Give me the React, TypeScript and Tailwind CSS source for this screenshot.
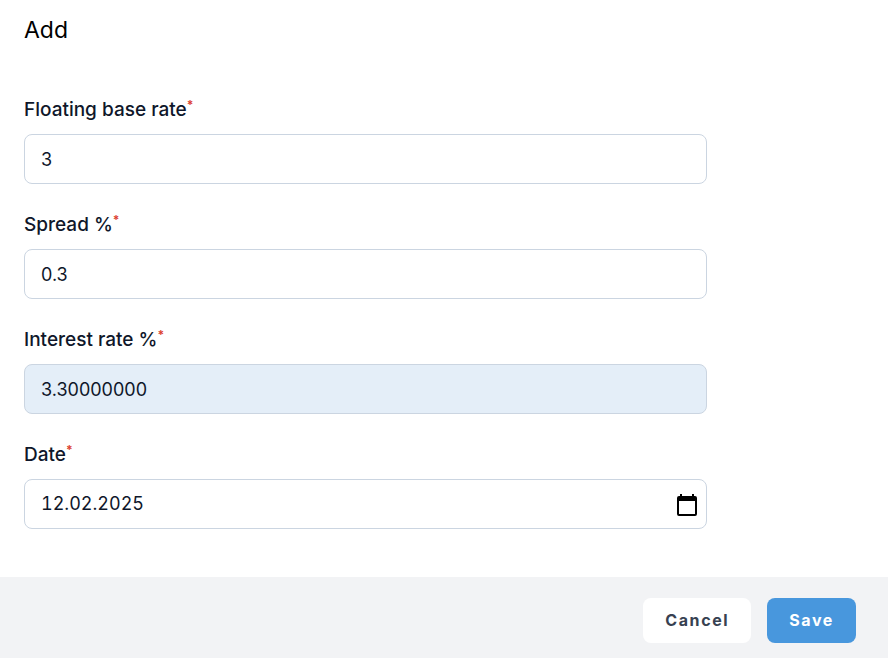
import { useState } from "react";
import type { FormEvent, ReactNode } from "react";

const inputClass =
  "h-[50px] w-full rounded-lg border border-[#cbd5e1] bg-white px-4 text-lg text-[#0f172a] outline-none focus:border-[#4897dd]";

function Field({ id, label, children }: { id: string; label: string; children: ReactNode }) {
  return (
    <div className="flex flex-col gap-[10px]">
      <label htmlFor={id} className="flex items-start text-[19px] leading-7 font-medium text-[#0f172a]">
        {label}
        <span className="text-xs leading-[18px] font-bold text-[#dc3f31]">*</span>
      </label>
      {children}
    </div>
  );
}

function CalendarIcon() {
  return (
    <svg width="20" height="22" viewBox="0 0 20 22" aria-hidden="true">
      <path
        fill="#000"
        fillRule="evenodd"
        d="M3 0h2v2h10V0h2v2h1a2 2 0 0 1 2 2v16a2 2 0 0 1-2 2H2a2 2 0 0 1-2-2V4a2 2 0 0 1 2-2h1zM2 7v13h16V7z"
      />
    </svg>
  );
}

export default function App() {
  const [base, setBase] = useState("3");
  const [spread, setSpread] = useState("0.3");
  const [date, setDate] = useState("12.02.2025");
  const rate = (Number(base) + Number(spread)).toFixed(8);

  return (
    <form
      className="flex min-h-screen flex-col bg-white font-['Inter',sans-serif]"
      onSubmit={(e: FormEvent) => e.preventDefault()}
    >
      <header className="px-6 pt-[14px]">
        <h1 className="text-[23px] leading-8 text-black">Add</h1>
      </header>

      <main className="flex grow flex-col px-6 pt-[50px] pb-12">
        <div className="flex w-full max-w-[683px] flex-col gap-[27px]">
          <Field id="base" label="Floating base rate">
            <input id="base" className={inputClass} value={base} onChange={(e) => setBase(e.target.value)} />
          </Field>
          <Field id="spread" label="Spread %">
            <input id="spread" className={inputClass} value={spread} onChange={(e) => setSpread(e.target.value)} />
          </Field>
          <Field id="rate" label="Interest rate %">
            <input
              id="rate"
              readOnly
              className="h-[50px] w-full rounded-lg border border-[#cbd5e1] bg-[#e4eef8] px-4 text-lg text-[#0f172a] outline-none"
              value={rate}
            />
          </Field>
          <Field id="date" label="Date">
            <div className="flex h-[50px] items-center rounded-lg border border-[#cbd5e1] bg-white pr-[9px] pl-4">
              <input
                id="date"
                className="min-w-0 grow bg-transparent text-lg text-[#0f172a] tabular-nums outline-none"
                value={date}
                onChange={(e) => setDate(e.target.value)}
              />
              <button type="button" aria-label="Open calendar" className="pt-[2px]">
                <CalendarIcon />
              </button>
            </div>
          </Field>
        </div>
      </main>

      <footer className="flex justify-end gap-4 bg-[#f2f3f5] px-8 pt-[21px] pb-[15px]">
        <button
          type="button"
          className="h-[45px] rounded-lg bg-white px-[22px] pb-[2px] text-base font-bold tracking-widest text-[#374151]"
        >
          Cancel
        </button>
        <button
          type="submit"
          className="h-[45px] rounded-lg bg-[#4897dd] px-[22px] pb-[2px] text-base font-bold tracking-widest text-white"
        >
          Save
        </button>
      </footer>
    </form>
  );
}
